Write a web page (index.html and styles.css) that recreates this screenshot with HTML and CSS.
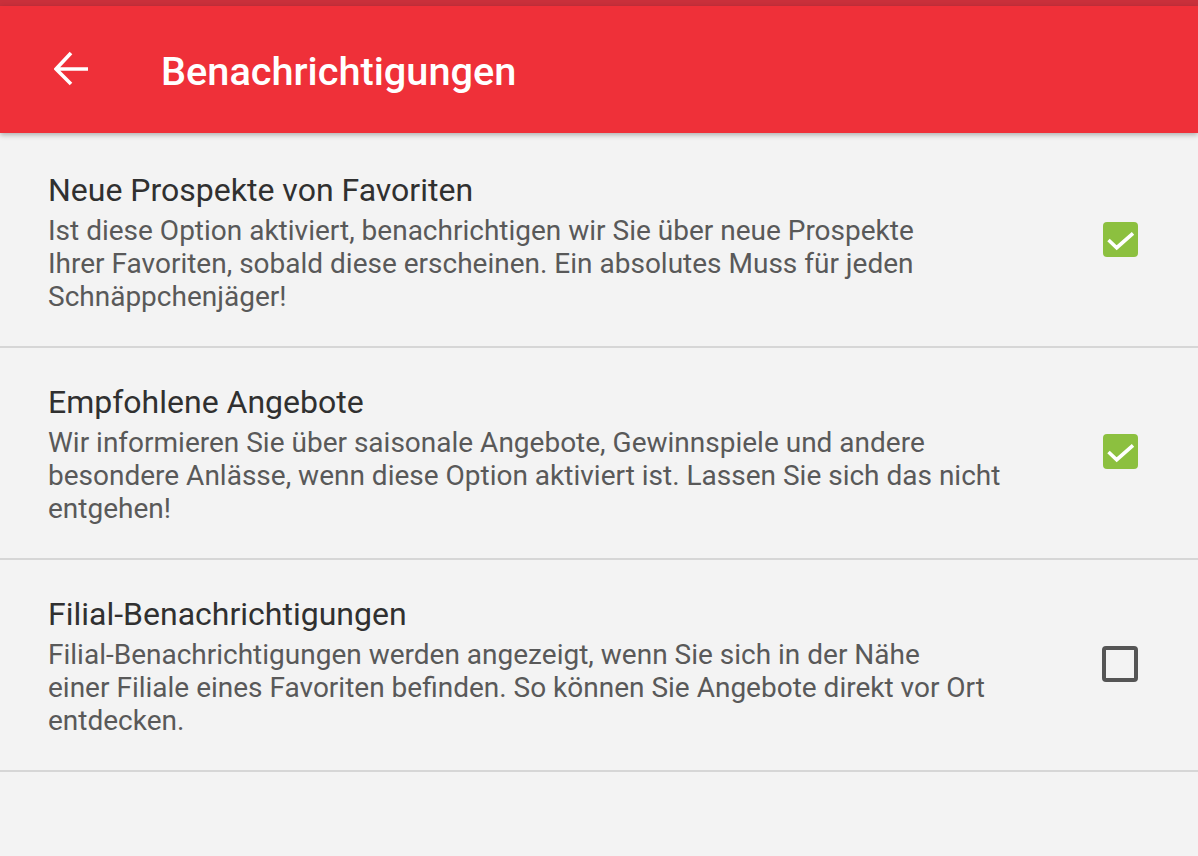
FILE: index.html
```html
<!DOCTYPE html>
<html lang="de">
<head>
<meta charset="utf-8">
<title>Benachrichtigungen</title>
<link rel="stylesheet" href="styles.css">
</head>
<body>
<div class="statusbar"></div>
<header class="appbar">
  <button class="back" aria-label="Zurück">
    <svg width="36" height="36" viewBox="0 0 36 36"><path d="M2 18 H34 M17 2 L2 18 L17 33" fill="none" stroke="#fff" stroke-width="3.6" stroke-linecap="butt" stroke-linejoin="miter"/></svg>
  </button>
  <h1 class="title">Benachrichtigungen</h1>
</header>
<main class="list">
  <section class="item">
    <div class="text">
      <h2 class="item-title">Neue Prospekte von Favoriten</h2>
      <p class="item-desc">Ist diese Option aktiviert, benachrichtigen wir Sie über neue Prospekte<br>Ihrer Favoriten, sobald diese erscheinen. Ein absolutes Muss für jeden<br>Schnäppchenjäger!</p>
    </div>
    <span class="checkbox checked"><svg width="35" height="35" viewBox="0 0 35 35"><path d="M5.5 18 L13.7 25.7 L30 11.3" fill="none" stroke="#fff" stroke-width="3.6"/></svg></span>
  </section>
  <section class="item">
    <div class="text">
      <h2 class="item-title">Empfohlene Angebote</h2>
      <p class="item-desc">Wir informieren Sie über saisonale Angebote, Gewinnspiele und andere<br>besondere Anlässe, wenn diese Option aktiviert ist. Lassen Sie sich das nicht<br>entgehen!</p>
    </div>
    <span class="checkbox checked"><svg width="35" height="35" viewBox="0 0 35 35"><path d="M5.5 18 L13.7 25.7 L30 11.3" fill="none" stroke="#fff" stroke-width="3.6"/></svg></span>
  </section>
  <section class="item">
    <div class="text">
      <h2 class="item-title">Filial-Benachrichtigungen</h2>
      <p class="item-desc">Filial-Benachrichtigungen werden angezeigt, wenn Sie sich in der Nähe<br>einer Filiale eines Favoriten befinden. So können Sie Angebote direkt vor Ort<br>entdecken.</p>
    </div>
    <span class="checkbox"></span>
  </section>
</main>
</body>
</html>
```
FILE: styles.css
```css
* { box-sizing: border-box; }
html, body { margin: 0; padding: 0; }
body {
  background: #f3f3f3;
  font-family: Roboto, "Noto Sans", sans-serif;
  width: 1198px;
  height: 856px;
  overflow: hidden;
}
.statusbar {
  height: 6px;
  background: #c9303b;
}
.appbar {
  height: 127px;
  background: #ef3039;
  display: flex;
  align-items: center;
  box-shadow: 0 2px 5px rgba(0,0,0,0.28);
  position: relative;
  z-index: 1;
}
.back {
  background: none;
  border: 0;
  padding: 0;
  margin-left: 54px;
  width: 36px;
  height: 36px;
  display: flex;
  margin-top: -2px;
}
.title {
  margin: 4px 0 0 71px;
  color: #fff;
  font-weight: 500;
  font-size: 39.7px;
  line-height: 48px;
}
.list { padding-top: 3px; }
.item {
  display: flex;
  align-items: center;
  padding: 35px 60px 33px 48px;
  border-bottom: 2px solid #d6d6d6;
}
.text { flex: 1; }
.item-title {
  margin: 0;
  font-weight: 400;
  font-size: 32px;
  line-height: 38px;
  color: #303030;
}
.item-desc {
  margin: 5px 0 0;
  font-size: 28px;
  line-height: 33px;
  color: #595959;
}
.checkbox {
  width: 36px;
  height: 36px;
  border: 4px solid #555;
  border-radius: 4px;
  display: flex;
  align-items: center;
  justify-content: center;
  margin-bottom: 5px;
}
.checkbox.checked {
  width: 35px;
  height: 35px;
  border: 0;
  background: #8cc03f;
}
.checkbox svg { display: block; }
```
